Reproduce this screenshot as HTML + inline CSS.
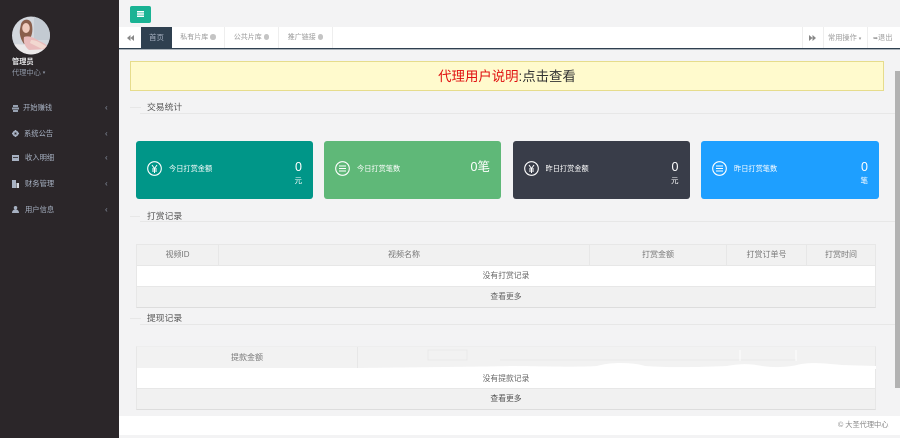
<!DOCTYPE html>
<html lang="zh"><head><meta charset="utf-8"><style>
*{box-sizing:border-box}
html,body{margin:0;padding:0;width:900px;height:438px;overflow:hidden;background:#f3f3f4}
body{position:relative;font-family:"Liberation Sans","Noto Sans CJK SC",sans-serif;font-size:8px;color:#676a6c}
.a{position:absolute;white-space:nowrap}
.b{position:absolute}
.m{color:#a7b1c2;font-size:7.3px;line-height:12px;left:23px}
.ar{color:#8a93a3;font-size:8px;line-height:12px;left:105px}
.tab{position:absolute;top:27px;height:21px;line-height:21px;text-align:center;font-size:7px;color:#999;border-right:1px solid #eee}
.x{display:inline-block;width:5.5px;height:5.5px;border-radius:50%;background:#c4c4c4;margin-left:2px;vertical-align:-0.5px}
.sec{font-size:8.8px;color:#555;line-height:12px}
.ln{position:absolute;height:1px;background:#e7e7e7}
.card{position:absolute;top:141px;width:177px;height:58px;border-radius:3px;color:#fff}
.card .t{position:absolute;left:33px;top:22px;font-size:7.2px;line-height:12px;white-space:nowrap}
.card .n{position:absolute;right:11px;top:18px;font-size:12.5px;line-height:16px}
.card .u{position:absolute;right:11px;top:34px;font-size:7.5px;line-height:12px}
.card svg{position:absolute;left:11px;top:20px}
.tb{position:absolute;left:136px;width:740px;border:1px solid #e7e7e7;border-bottom:1px solid #ddd}
.h{position:absolute;left:0;right:0;background:#f1f1f1;font-size:8px;color:#777}
.c{position:absolute;top:0;height:100%;text-align:center;border-right:1px solid #e7e7e7;line-height:20px}
.r{position:absolute;left:0;right:0;height:21px;line-height:20px;text-align:center;font-size:7.8px;color:#666;border-top:1px solid #e7e7e7}
</style></head><body>

<div class="b" style="left:0;top:0;width:119px;height:438px;background:#2b2629"></div>
<svg class="b" style="left:12px;top:16px" width="38" height="39" viewBox="0 0 38 39">
<defs><clipPath id="cp"><circle cx="19" cy="19.5" r="19"/></clipPath></defs>
<g clip-path="url(#cp)">
<rect width="38" height="39" fill="#d3d7dd"/>
<rect x="22" y="0" width="16" height="24" fill="#c3cad2"/>
<path d="M0 28 L38 30 V39 H0Z" fill="#ece9ea"/>
<path d="M9 8 C11 2 19 2 20 9 C21 15 20 20 17 24 L12 28 C9 24 7 18 8 13Z" fill="#8a5f4c"/>
<ellipse cx="14" cy="12" rx="3.8" ry="5" fill="#efcbbd"/>
<path d="M12 21 C17 19 23 22 27 25 C32 27 36 29 36 33 L17 34 C13 31 11 26 12 21Z" fill="#e9bcbc"/>
<path d="M19 24 C24 24 29 27 35 31 L30 33 C26 31 22 29 18 27Z" fill="#f2d8d0"/>
</g></svg>
<div class="a" style="left:12px;top:56px;font-size:7.2px;font-weight:bold;color:#e8e8ea;line-height:12px">管理员</div>
<div class="a" style="left:12px;top:67px;font-size:7.2px;color:#8f97a6;line-height:12px">代理中心 <span style="font-size:5px;vertical-align:1px">▾</span></div>

<svg class="b" style="left:12px;top:105px" width="7" height="7" viewBox="0 0 7 7"><path d="M1 0h5v2H1zM0 2.500h7v2H0zM1 5h5v2H1z" fill="#97a1b1"/></svg>
<div class="a m" style="top:102px">开始赚钱</div><div class="a ar" style="top:102px">‹</div>
<svg class="b" style="left:12px;top:130px" width="7" height="7" viewBox="0 0 8 8"><circle cx="4" cy="4" r="2.5" fill="none" stroke="#a7b1c2" stroke-width="2"/><path d="M3.3 0h1.4v8H3.3zM0 3.3h8v1.400H0z" fill="#a7b1c2"/><circle cx="4" cy="4" r="1.1" fill="#2b2629"/></svg>
<div class="a m" style="top:127.5px;left:24px">系统公告</div><div class="a ar" style="top:127.5px">‹</div>
<svg class="b" style="left:12px;top:155px" width="7" height="6" viewBox="0 0 7 6"><path d="M0 0h7v6H0z" fill="#a7b1c2"/><path d="M1 2h5v.8H1z" fill="#2b2629"/></svg>
<div class="a m" style="top:152px;left:25px">收入明细</div><div class="a ar" style="top:152px">‹</div>
<svg class="b" style="left:12px;top:180px" width="7" height="8" viewBox="0 0 7 8"><path d="M0 0h4v8H0z" fill="#a7b1c2"/><path d="M4.500 3H7v5H4.500z" fill="#d5d9e0"/></svg>
<div class="a m" style="top:178px;left:25px">财务管理</div><div class="a ar" style="top:178px">‹</div>
<svg class="b" style="left:12px;top:206px" width="7" height="7" viewBox="0 0 8 8"><circle cx="4" cy="2" r="2" fill="#a7b1c2"/><path d="M0 8C0 5 2 4 4 4s4 1 4 4z" fill="#a7b1c2"/></svg>
<div class="a m" style="top:203.5px;left:25px">用户信息</div><div class="a ar" style="top:203.5px">‹</div>

<div class="b" style="left:130px;top:6px;width:21px;height:17px;background:#1ab394;border-radius:2px"></div>
<svg class="b" style="left:137px;top:11px" width="7" height="6" viewBox="0 0 7 6"><path d="M0 0h7v1.500H0zM0 2.200h7v1.500H0zM0 4.500h7V6H0z" fill="#fff"/></svg>

<div class="b" style="left:119px;top:27px;width:781px;height:21px;background:#fff"></div>
<div class="b" style="left:119px;top:48px;width:781px;height:1px;background:#2f4050"></div>
<div class="b" style="left:119px;top:49px;width:781px;height:1px;background:#a9b1b8"></div>
<svg class="b" style="left:127px;top:35px" width="7" height="6" viewBox="0 0 7 6"><path d="M3.500 0v6L0 3zM7 0v6L3.500 3z" fill="#888"/></svg>
<div class="tab" style="left:141px;width:31px;background:#2f4050;color:#a7b1c2;border:0;font-size:7.5px">首页</div>
<div class="tab" style="left:172px;width:53px">私有片库<span class="x"></span></div>
<div class="tab" style="left:225px;width:54px">公共片库<span class="x"></span></div>
<div class="tab" style="left:279px;width:54px">推广链接<span class="x"></span></div>
<div class="b" style="left:802px;top:27px;width:1px;height:21px;background:#eee"></div>
<svg class="b" style="left:809px;top:35px" width="7" height="6" viewBox="0 0 7 6"><path d="M0 0v6l3.500-3zM3.500 0v6L7 3z" fill="#888"/></svg>
<div class="b" style="left:823px;top:27px;width:1px;height:21px;background:#eee"></div>
<div class="a" style="left:828px;top:27px;line-height:21px;font-size:7.2px;color:#999">常用操作 <span style="font-size:5px">▾</span></div>
<div class="b" style="left:867px;top:27px;width:1px;height:21px;background:#eee"></div>
<div class="a" style="left:873px;top:27px;line-height:21px;font-size:7.2px;color:#999"><span style="font-size:6px">➥</span>退出</div>

<div class="b" style="left:130px;top:61px;width:754px;height:30px;background:#fffacd;border:1px solid #e6dc8c;text-align:center;line-height:29px;font-size:13.4px;color:#e01010;white-space:nowrap">代理用户说明<span style="color:#333">:点击查看</span></div>

<div class="ln" style="left:130px;top:107px;width:11px"></div>
<div class="a sec" style="left:147px;top:101px">交易统计</div>
<div class="ln" style="left:140px;top:113px;width:755px"></div>

<div class="card" style="left:136px;background:#009688">
<svg width="15" height="15" viewBox="0 0 15 15"><circle cx="7.500" cy="7.500" r="6.800" fill="none" stroke="#fff" stroke-width="1.100"/><path d="M5 4l2.500 3.500L10 4M7.500 7.500V12M5 8h5M5 10h5" fill="none" stroke="#fff" stroke-width="1"/></svg>
<div class="t">今日打赏金额</div><div class="n">0</div><div class="u">元</div></div>
<div class="card" style="left:324px;background:#5fb878">
<svg width="15" height="15" viewBox="0 0 15 15"><circle cx="7.500" cy="7.500" r="6.800" fill="none" stroke="#fff" stroke-width="1.100"/><path d="M4 5h7M4 7.500h7M4 10h7" fill="none" stroke="#fff" stroke-width="1"/></svg>
<div class="t">今日打赏笔数</div><div class="n">0笔</div></div>
<div class="card" style="left:512.500px;background:#393d49">
<svg width="15" height="15" viewBox="0 0 15 15"><circle cx="7.500" cy="7.500" r="6.800" fill="none" stroke="#fff" stroke-width="1.100"/><path d="M5 4l2.500 3.500L10 4M7.500 7.500V12M5 8h5M5 10h5" fill="none" stroke="#fff" stroke-width="1"/></svg>
<div class="t">昨日打赏金额</div><div class="n">0</div><div class="u">元</div></div>
<div class="card" style="left:701px;background:#1e9fff;width:178px">
<svg width="15" height="15" viewBox="0 0 15 15"><circle cx="7.500" cy="7.500" r="6.800" fill="none" stroke="#fff" stroke-width="1.100"/><path d="M4 5h7M4 7.500h7M4 10h7" fill="none" stroke="#fff" stroke-width="1"/></svg>
<div class="t">昨日打赏笔数</div><div class="n">0</div><div class="u">笔</div></div>

<div class="ln" style="left:130px;top:216px;width:10px"></div>
<div class="a sec" style="left:147px;top:210px">打赏记录</div>
<div class="ln" style="left:140px;top:221px;width:755px"></div>

<div class="tb" style="top:244px;height:64px">
<div class="h" style="top:0;height:20px">
<div class="c" style="left:0;width:82px">视频ID</div>
<div class="c" style="left:82px;width:371px">视频名称</div>
<div class="c" style="left:453px;width:137px">打赏金额</div>
<div class="c" style="left:590px;width:80px">打赏订单号</div>
<div class="c" style="left:670px;width:68px;border:0">打赏时间</div></div>
<div class="r" style="top:20px;background:#fff">没有打赏记录</div>
<div class="r" style="top:41px;background:#f1f1f1">查看更多</div>
</div>

<div class="ln" style="left:130px;top:318px;width:11px"></div>
<div class="a sec" style="left:147px;top:312px">提现记录</div>
<div class="ln" style="left:140px;top:324px;width:755px"></div>

<div class="tb" style="top:346px;height:64px;border-top-color:#eee">
<div class="h" style="top:0;height:21px;background:#f2f2f2">
<div class="c" style="left:0;width:221px;line-height:21px">提款金额</div></div>
<div class="r" style="top:21px;background:#fff;border-top:0;line-height:21px">没有提款记录</div>
<div class="r" style="top:41px;background:#f1f1f1;color:#555">查看更多</div>
</div>
<svg class="b" style="left:357px;top:347px" width="519" height="22" viewBox="0 0 519 22">
<path d="M71 3H110V13H71ZM143 13H383M439 13H383" fill="none" stroke="#e6e6e6" stroke-width=".8"/>
<path d="M383 3v11M439 3v11" fill="none" stroke="#fff" stroke-width=".8"/>
<path d="M0 21 L130 19.500 C170 18 205 21 240 19 C253 15 275 15 288 19 C315 21 345 20 370 19 C385 16 395 17 405 19 C420 21 430 20 440 18 C450 15 465 16 485 18 L519 19 V22 H0Z" fill="#fff"/>
</svg>

<div class="b" style="left:119px;top:416px;width:781px;height:19px;background:#fff"></div>
<div class="a" style="left:838px;top:419px;font-size:7.200px;line-height:12px;color:#888">© 大圣代理中心</div>

<div class="b" style="left:895px;top:71px;width:5px;height:317px;background:#b2b2b2"></div>
</body></html>
